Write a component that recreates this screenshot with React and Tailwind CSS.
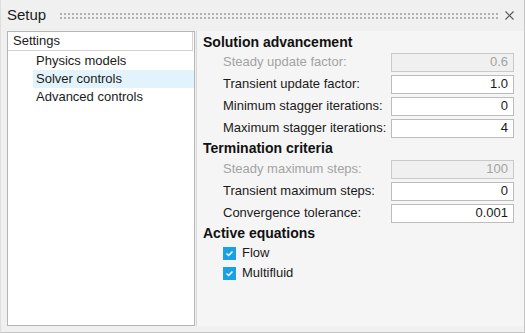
import { useState } from "react";

const FONT = "font-['Liberation_Sans',Arial,sans-serif]";

function Grip() {
  return (
    <svg className="flex-1 h-[6px]" preserveAspectRatio="none">
      <defs>
        <pattern id="grip" width="4" height="4" patternUnits="userSpaceOnUse">
          <rect x="0" y="0" width="2" height="2" fill="#b0b0b0" />
        </pattern>
      </defs>
      <rect x="0" y="0" width="100%" height="6" fill="url(#grip)" />
    </svg>
  );
}

function Field({ label, value, disabled }) {
  return (
    <div className="h-[22px] flex items-center pl-[26px] pr-[10px]">
      <span className={"flex-1 text-[13px] " + (disabled ? "text-[#a3a3a3]" : "text-[#1a1a1a]")}>
        {label}
      </span>
      <div
        className={
          "w-[123px] h-[19px] border flex items-center justify-end pr-[5px] text-[13px] " +
          (disabled
            ? "bg-[#f0f0f0] border-[#cacaca] text-[#a3a3a3]"
            : "bg-white border-[#bcbcbc] text-[#1a1a1a]")
        }
      >
        {value}
      </div>
    </div>
  );
}

function Check({ label }) {
  return (
    <div className="h-[20px] flex items-center pl-[26px] gap-[6px]">
      <div className="w-[13px] h-[13px] bg-[#1aa0e4] flex items-center justify-center">
        <svg width="9" height="9" viewBox="0 0 9 9">
          <path d="M1.5 4.6 L3.6 6.6 L7.5 2.4" stroke="white" strokeWidth="1.4" fill="none" />
        </svg>
      </div>
      <span className="text-[13px] text-[#1a1a1a]">{label}</span>
    </div>
  );
}

export default function App() {
  const [selected, setSelected] = useState("Solver controls");
  const items = ["Physics models", "Solver controls", "Advanced controls"];

  return (
    <div className={"w-[525px] h-[333px] bg-[#f0f0f0] border-r border-b border-r-[#c4c4c4] border-b-[#c4c4c4] border-l border-l-[#dedede] flex flex-col " + FONT}>
      {/* TITLE BAR */}
      <div className="h-[31px] flex items-center pl-[6px] pr-[10px] shrink-0">
        <span className="text-[15px] text-[#1a1a1a] mr-[14px]">Setup</span>
        <Grip />
        <svg className="ml-[6px]" width="9" height="9" viewBox="0 0 9 9">
          <path d="M0.5 0.5 L8.5 8.5 M8.5 0.5 L0.5 8.5" stroke="#555" strokeWidth="1.1" />
        </svg>
      </div>

      {/* BODY */}
      <div className="flex-1 flex pl-[6px] pb-[6px] min-h-0">
        {/* TREE */}
        <div className="w-[188px] bg-white border border-[#b6b6b6] flex flex-col">
          <div className="h-[19px] border-b border-[#d4d4d4] flex items-center pl-[5px] text-[13px] text-[#1a1a1a] border-r border-r-[#d4d4d4] mr-[1px]">
            Settings
          </div>
          <div className="pt-[1px]">
            {items.map((it) => (
              <div
                key={it}
                onClick={() => setSelected(it)}
                className={
                  "h-[18px] ml-[25px] pl-[3px] flex items-center text-[13px] text-[#1a1a1a] cursor-default " +
                  (selected === it ? "bg-[#e3f3fc]" : "")
                }
              >
                {it}
              </div>
            ))}
          </div>
        </div>

        {/* FORM */}
        <div className="flex-1 ml-[1px] border-l border-[#d8d8d8] bg-[#f5f5f5] pt-[3px]">
          <div className="h-[17px] flex items-center pl-[6px] text-[14px] font-bold text-[#111]">
            Solution advancement
          </div>
          <Field label="Steady update factor:" value="0.6" disabled />
          <Field label="Transient update factor:" value="1.0" />
          <Field label="Minimum stagger iterations:" value="0" />
          <Field label="Maximum stagger iterations:" value="4" />
          <div className="h-[19px] flex items-center pl-[6px] text-[14px] font-bold text-[#111]">
            Termination criteria
          </div>
          <Field label="Steady maximum steps:" value="100" disabled />
          <Field label="Transient maximum steps:" value="0" />
          <Field label="Convergence tolerance:" value="0.001" />
          <div className="h-[19px] flex items-center pl-[6px] text-[14px] font-bold text-[#111]">
            Active equations
          </div>
          <Check label="Flow" />
          <Check label="Multifluid" />
        </div>
      </div>
    </div>
  );
}
